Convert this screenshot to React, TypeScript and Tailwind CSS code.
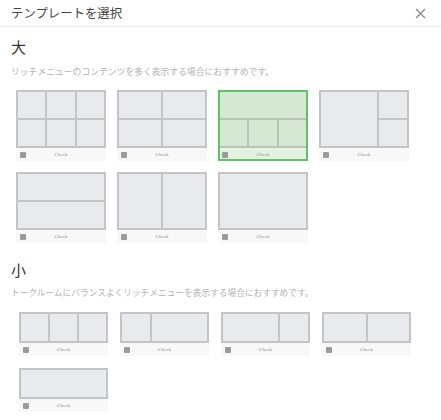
import React from "react";

type Cell = { col: string; row: string };

type Template = {
    cols: string;
    rows: string;
    cells: Cell[];
};

const font = { fontFamily: '"Noto Sans CJK JP", "Noto Sans", sans-serif' };

// grid-template definitions for each layout, cells span via the listed classes
const largeTemplates: Template[] = [
    {
        cols: "grid-cols-3",
        rows: "grid-rows-2",
        cells: Array.from({ length: 6 }, () => ({ col: "", row: "" })),
    },
    {
        cols: "grid-cols-2",
        rows: "grid-rows-2",
        cells: Array.from({ length: 4 }, () => ({ col: "", row: "" })),
    },
    {
        cols: "grid-cols-3",
        rows: "grid-rows-2",
        cells: [
            { col: "col-span-3", row: "" },
            { col: "", row: "" },
            { col: "", row: "" },
            { col: "", row: "" },
        ],
    },
    {
        cols: "grid-cols-[2fr_1fr]",
        rows: "grid-rows-2",
        cells: [
            { col: "", row: "row-span-2" },
            { col: "", row: "" },
            { col: "", row: "" },
        ],
    },
    {
        cols: "grid-cols-1",
        rows: "grid-rows-2",
        cells: [{ col: "", row: "" }, { col: "", row: "" }],
    },
    {
        cols: "grid-cols-2",
        rows: "grid-rows-1",
        cells: [{ col: "", row: "" }, { col: "", row: "" }],
    },
    {
        cols: "grid-cols-1",
        rows: "grid-rows-1",
        cells: [{ col: "", row: "" }],
    },
];

const smallTemplates: Template[] = [
    {
        cols: "grid-cols-3",
        rows: "grid-rows-1",
        cells: [{ col: "", row: "" }, { col: "", row: "" }, { col: "", row: "" }],
    },
    {
        cols: "grid-cols-[1fr_2fr]",
        rows: "grid-rows-1",
        cells: [{ col: "", row: "" }, { col: "", row: "" }],
    },
    {
        cols: "grid-cols-[2fr_1fr]",
        rows: "grid-rows-1",
        cells: [{ col: "", row: "" }, { col: "", row: "" }],
    },
    {
        cols: "grid-cols-2",
        rows: "grid-rows-1",
        cells: [{ col: "", row: "" }, { col: "", row: "" }],
    },
    {
        cols: "grid-cols-1",
        rows: "grid-rows-1",
        cells: [{ col: "", row: "" }],
    },
];

type CardProps = {
    template: Template;
    size: "large" | "small";
    selected?: boolean;
};

const TemplateCard: React.FC<CardProps> = ({ template, size, selected }) => {
    const width = size === "large" ? "w-[90px]" : "w-[89px]";
    const height = size === "large" ? "h-[58px]" : "h-[31px]";

    return (
        <div
            className={`${width} flex flex-col ${
                selected
                    ? "outline-2 outline-offset-[-2px] outline-[#5cc466] bg-[#e4f2e2]"
                    : "bg-[#f8f8f9]"
            }`}
        >
            <div
                className={`${height} grid ${template.cols} ${template.rows} gap-[2px] border-2 ${
                    selected ? "border-[#b9c4b8] bg-[#b9c4b8]" : "border-[#c4c4c6] bg-[#c4c4c6]"
                }`}
            >
                {template.cells.map((c, i) => (
                    <div
                        key={i}
                        className={`${c.col} ${c.row} ${selected ? "bg-[#d6e8d4]" : "bg-[#e9eaed]"}`}
                    />
                ))}
            </div>
            <div className="relative h-[13px] flex items-center px-[4px]">
                <span className="w-[6px] h-[6px] bg-[#9b9b9b] rounded-[1px]" />
                <span
                    className="absolute left-0 right-0 text-center text-[5px] text-[#8a8a8a] leading-none"
                    style={{ fontFamily: '"Liberation Serif", serif' }}
                >
                    Check
                </span>
            </div>
        </div>
    );
};

const App: React.FC = () => {
    return (
        <div className="w-[441px] h-[420px] bg-white overflow-hidden" style={font}>
            <div className="h-[27px] flex items-center justify-between pl-[11px] pr-[10px] border-b border-[#ececec]">
                <h1 className="text-[12.4px] text-[#444] leading-none">テンプレートを選択</h1>
                <svg width="11" height="11" viewBox="0 0 11 11" className="mr-[5px]">
                    <path d="M1 1 L10 10 M10 1 L1 10" stroke="#8a8a8a" strokeWidth="1.3" />
                </svg>
            </div>

            <div className="pl-[11px] pt-[10px]">
                <h2 className="text-[15px] leading-[20px] text-[#333]">大</h2>
                <p className="mt-[9px] text-[8.8px] leading-[12px] text-[#b4b4b4]">
                    リッチメニューのコンテンツを多く表示する場合におすすめです。
                </p>
                <div className="mt-[12px] ml-[5px] w-[420px] flex flex-wrap gap-x-[11px] gap-y-[11px]">
                    {largeTemplates.map((t, i) => (
                        <TemplateCard key={i} template={t} size="large" selected={i === 2} />
                    ))}
                </div>

                <h2 className="mt-[17px] text-[15px] leading-[20px] text-[#333]">小</h2>
                <p className="mt-[7px] text-[8.7px] leading-[12px] text-[#b4b4b4]">
                    トークルームにバランスよくリッチメニューを表示する場合におすすめです。
                </p>
                <div className="mt-[13px] ml-[8px] w-[420px] flex flex-wrap gap-x-[12px] gap-y-[12px]">
                    {smallTemplates.map((t, i) => (
                        <TemplateCard key={i} template={t} size="small" />
                    ))}
                </div>
            </div>
        </div>
    );
};

export default App;
